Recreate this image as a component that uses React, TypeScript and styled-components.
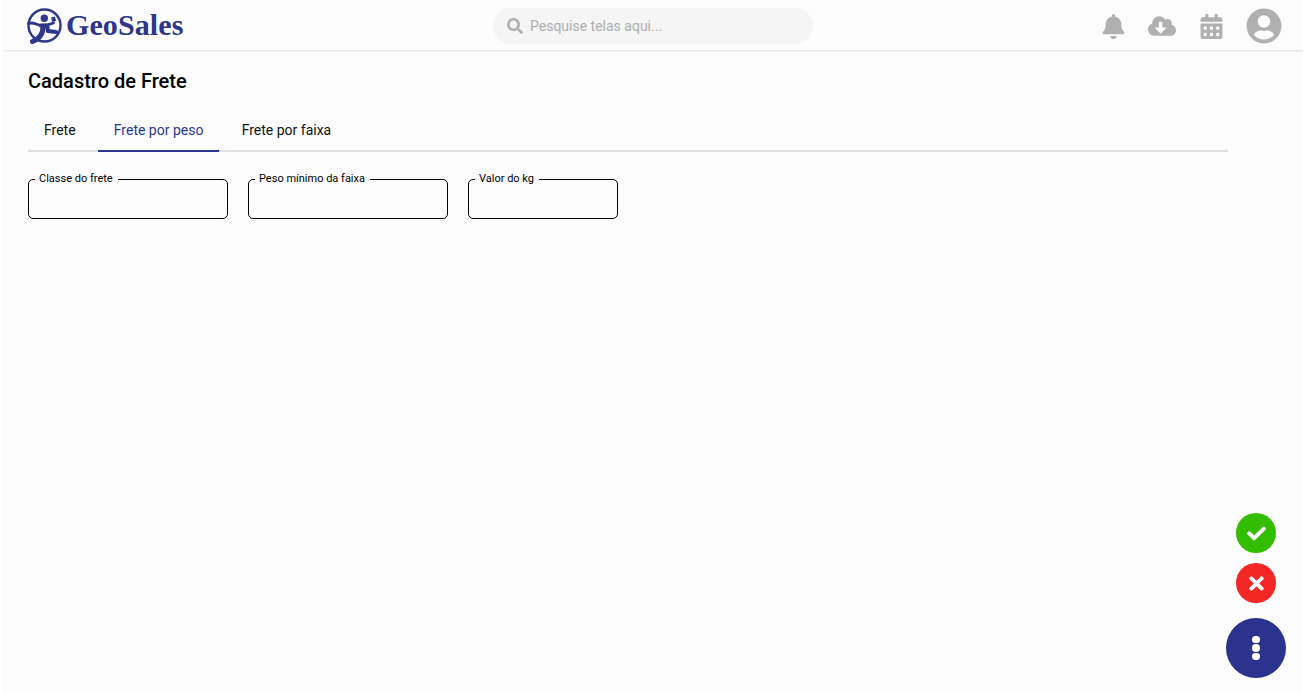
import styled, { createGlobalStyle } from "styled-components";
import { FaBell, FaCalendarAlt, FaCheck, FaCloudDownloadAlt, FaSearch, FaTimes, FaUserCircle } from "react-icons/fa";

const GlobalStyle = createGlobalStyle`
  html, body { margin: 0; padding: 0; height: 100%; background: #fff; }
  #root { height: 100%; }
  * { box-sizing: border-box; }
`;

const Page = styled.div`
  display: flex;
  flex-direction: column;
  width: 1300px;
  height: 692px;
  margin: 0 3px;
  background: #fcfcfc;
  font-family: Roboto, sans-serif;
  overflow: hidden;
`;

const Header = styled.header`
  position: relative;
  display: grid;
  grid-template-columns: 467px 320px 1fr;
  align-items: center;
  height: 50px;
  flex-shrink: 0;
  padding: 0 21px 0 23px;
  background: #fcfcfc;
  box-shadow: 0 1px 2px rgba(0, 0, 0, 0.12);
`;

const Logo = styled.div`
  display: flex;
  align-items: center;
  gap: 2px;
  color: #2d3688;
`;

const LogoName = styled.span`
  font: 700 30px/36px "Liberation Serif", serif;
  letter-spacing: 0.1px;
`;

const SearchBox = styled.div`
  display: flex;
  align-items: center;
  gap: 7px;
  height: 36px;
  padding: 0 14px;
  margin-top: 1px;
  border-radius: 18px;
  background: #f5f5f5;
  color: #b0b0b0;
  font-size: 14px;
`;

const Actions = styled.div`
  display: flex;
  align-items: center;
  justify-content: flex-end;
  gap: 22.5px;
  padding-top: 2px;
  color: #b0b0b0;
`;

const Content = styled.main`
  display: flex;
  flex-direction: column;
  padding: 19px 25px;
`;

const Title = styled.h1`
  margin: 0;
  font: 500 20px/24px Roboto, sans-serif;
  color: #000;
`;

const Tabs = styled.nav`
  display: flex;
  gap: 6.2px;
  width: 1200px;
  height: 42px;
  margin-top: 17px;
  border-bottom: 2px solid #e0e0e0;
`;

const Tab = styled.div<{ $active?: boolean }>`
  height: 42px;
  padding: 0 16px;
  font: 400 14px/40px Roboto, sans-serif;
  color: ${p => (p.$active ? "#2d3592" : "#111")};
  border-bottom: 2px solid ${p => (p.$active ? "#2d3592" : "transparent")};
`;

const Form = styled.form`
  display: flex;
  gap: 20px;
  margin-top: 20px;
`;

const Field = styled.fieldset<{ $width: number }>`
  width: ${p => p.$width}px;
  height: 47px;
  margin: 0;
  padding: 0 6px;
  border: 1px solid #000;
  border-radius: 5px;
  background: transparent;
`;

const Legend = styled.legend`
  padding: 0 5px 2px 4px;
  font: 400 11px/13px Roboto, sans-serif;
  color: #000;
`;

const FabStack = styled.div`
  position: fixed;
  right: 20px;
  bottom: 14px;
  display: flex;
  flex-direction: column;
  align-items: center;
  gap: 10px;
`;

const Fab = styled.button<{ $color: string; $size: number }>`
  display: flex;
  align-items: center;
  justify-content: center;
  width: ${p => p.$size}px;
  height: ${p => p.$size}px;
  padding: 0;
  border: 0;
  border-radius: 50%;
  background: ${p => p.$color};
  color: #fff;
`;

const MainFab = styled(Fab)`
  flex-direction: column;
  gap: 1px;
  margin-top: 5px;
`;

const Dot = styled.span`
  width: 7.4px;
  height: 7.4px;
  border-radius: 50%;
  background: #fff;
`;

function LogoMark() {
  return (
    <svg width="38" height="38" viewBox="0 0 38 38" fill="none">
      <circle cx="18.5" cy="19.5" r="16" stroke="currentColor" strokeWidth="2.4" />
      <circle cx="18.3" cy="12.3" r="3.7" fill="currentColor" />
      <rect x="25.5" y="11" width="4" height="4.5" fill="currentColor" transform="rotate(-15 27.5 13)" />
      <path d="M2.5 17.5 C7 15.5 11 19 15 19.5 L21 19 L27.5 17" stroke="currentColor" strokeWidth="2.8" strokeLinecap="round" />
      <path d="M15 19.5 L21 19.5 L22 25 L30 26" stroke="currentColor" strokeWidth="4.2" strokeLinecap="round" strokeLinejoin="round" />
      <path d="M17 21 C17 28 13 33 6.5 35.5" stroke="currentColor" strokeWidth="5" strokeLinecap="round" />
    </svg>
  );
}

export default function App() {
  return (
    <Page>
      <GlobalStyle />
      <Header>
        <Logo>
          <LogoMark />
          <LogoName>GeoSales</LogoName>
        </Logo>
        <SearchBox>
          <FaSearch size={16} />
          Pesquise telas aqui...
        </SearchBox>
        <Actions>
          <FaBell size={25} />
          <FaCloudDownloadAlt size={28} />
          <FaCalendarAlt size={25} />
          <FaUserCircle size={36} />
        </Actions>
      </Header>
      <Content>
        <Title>Cadastro de Frete</Title>
        <Tabs>
          <Tab>Frete</Tab>
          <Tab $active>Frete por peso</Tab>
          <Tab>Frete por faixa</Tab>
        </Tabs>
        <Form>
          <Field $width={200}><Legend>Classe do frete</Legend></Field>
          <Field $width={200}><Legend>Peso mínimo da faixa</Legend></Field>
          <Field $width={150}><Legend>Valor do kg</Legend></Field>
        </Form>
      </Content>
      <FabStack>
        <Fab $color="#33bd00" $size={40}><FaCheck size={19} /></Fab>
        <Fab $color="#f42727" $size={40}><FaTimes size={21} /></Fab>
        <MainFab $color="#2a348f" $size={60}><Dot /><Dot /><Dot /></MainFab>
      </FabStack>
    </Page>
  );
}
